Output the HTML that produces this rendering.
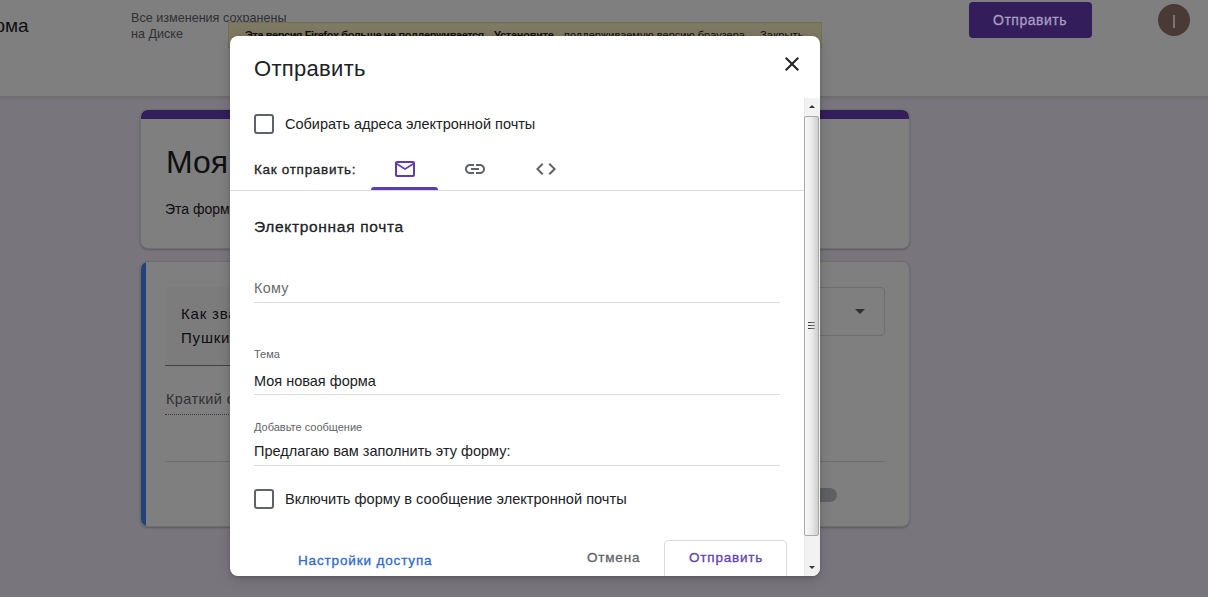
<!DOCTYPE html>
<html><head><meta charset="utf-8">
<style>
*{box-sizing:border-box;margin:0;padding:0}
html,body{width:1208px;height:597px;overflow:hidden}
body{position:relative;background:#f0ebf8;font-family:"Liberation Sans",sans-serif;color:#202124}
.abs{position:absolute}
.t{position:absolute;white-space:nowrap;line-height:1}
#hdr{left:0;top:0;width:1208px;height:97px;background:#fff;border-bottom:1px solid #dadce0;box-shadow:0 1px 3px rgba(0,0,0,.12)}
.card{position:absolute;background:#fff;border:1px solid #dadce0;border-radius:8px;overflow:hidden;box-shadow:0 1px 2px rgba(60,64,67,.3)}
#overlay{left:0;top:0;width:1208px;height:597px;background:rgba(0,0,0,.5)}
#dlg{left:230px;top:36px;width:590px;height:540px;background:#fff;border-radius:8px;overflow:hidden;box-shadow:0 3px 12px rgba(0,0,0,.18),0 1px 3px rgba(0,0,0,.12)}
.cb{position:absolute;width:20px;height:20px;border:2px solid #5f6368;border-radius:3px}
.med{-webkit-text-stroke:0.3px currentColor}
.uline{position:absolute;height:1px;background:#dadce0}
</style></head>
<body>
<!-- page header -->
<div id="hdr" class="abs">
  <div class="t" style="left:-131px;top:16px;font-size:19px;color:#202124">Моя новая форма</div>
  <div class="t" style="left:131px;top:10px;font-size:12.6px;line-height:16px;color:#5f6368">Все изменения сохранены<br>на Диске</div>
  <div class="abs" style="left:969px;top:2px;width:123px;height:36px;background:#673ab7;border-radius:4px"></div>
  <div class="abs" style="left:1158px;top:4px;width:32px;height:32px;border-radius:50%;background:#94746a"></div>
  <div class="abs" style="left:1173px;top:15px;width:2px;height:13px;background:#f0e8e8"></div>
</div>
<!-- butterbar -->
<div class="abs" style="left:228px;top:22px;width:594px;height:26px;background:#fdf3c4;border:1px solid #e9dca8"></div>
<div class="t" style="left:245px;top:30px;font-size:11px;font-weight:bold;letter-spacing:-0.4px;color:#222">Эта версия Firefox больше не поддерживается.</div>
<div class="t" style="left:494px;top:30px;font-size:11px;font-weight:bold;letter-spacing:-0.25px;color:#222">Установите</div>
<div class="t" style="left:564px;top:30px;font-size:11px;color:#222">поддерживаемую версию браузера.</div>
<div class="t" style="left:760px;top:30px;font-size:11px;letter-spacing:0.2px;color:#222">Закрыть</div>

<!-- card 1 -->
<div class="card" style="left:140px;top:109px;width:770px;height:140px">
  <div class="abs" style="left:-1px;top:-1px;width:770px;height:10px;background:#673ab7"></div>
  <div class="t" style="left:25px;top:36px;font-size:32px;color:#202124">Моя новая форма</div>
  <div class="t" style="left:24px;top:92px;font-size:14px;color:#202124">Эта форма</div>
</div>
<!-- card 2 -->
<div class="card" style="left:140px;top:261px;width:770px;height:266px">
  <div class="abs" style="left:-1px;top:-1px;width:6px;height:266px;background:#4285f4"></div>
  <div class="abs" style="left:24px;top:25px;width:500px;height:79px;background:#f8f9fa;border-bottom:1px solid #80868b"></div>
  <div class="t" style="left:40px;top:40px;font-size:15px;letter-spacing:0.8px;line-height:24px;color:#202124">Как звали<br>Пушкина?</div>
  <div class="t" style="left:25px;top:130px;font-size:14.5px;letter-spacing:0.4px;color:#5f6368">Краткий ответ</div>
  <div class="abs" style="left:24px;top:152px;width:300px;height:1px;border-bottom:1px dotted #70757a"></div>
  <div class="abs" style="left:24px;top:199px;width:720px;height:1px;background:#dadce0"></div>
  <div class="abs" style="left:670px;top:25px;width:74px;height:49px;border:1px solid #dadce0;border-radius:4px"></div>
  <div class="abs" style="left:714px;top:47px;width:0;height:0;border-left:5px solid transparent;border-right:5px solid transparent;border-top:5px solid #5f6368"></div>
  <div class="abs" style="left:660px;top:226px;width:36px;height:14px;border-radius:7px;background:#bdc1c6"></div>
</div>

<div id="overlay" class="abs"></div>
<div class="t med" style="left:993px;top:13px;font-size:14px;letter-spacing:0.5px;color:#a99ec2">Отправить</div>

<!-- dialog -->
<div id="dlg" class="abs">
  <div class="t" style="left:24px;top:22px;font-size:22px;letter-spacing:0.3px;color:#202124">Отправить</div>
  <svg class="abs" style="left:550px;top:16px" width="24" height="24" viewBox="0 0 24 24"><path d="M19 6.41L17.59 5 12 10.59 6.41 5 5 6.41 10.59 12 5 17.59 6.41 19 12 13.41 17.59 19 19 17.59 13.41 12z" fill="#202124"/></svg>

  <div class="cb" style="left:24px;top:78px"></div>
  <div class="t" style="left:55px;top:81px;font-size:14.5px;color:#202124">Собирать адреса электронной почты</div>

  <div class="t med" style="left:24px;top:127px;font-size:13.5px;letter-spacing:0.7px;color:#202124">Как отправить:</div>
  <svg class="abs" style="left:163px;top:121px" width="24" height="24" viewBox="0 0 24 24"><path d="M20 4H4c-1.1 0-2 .9-2 2v12c0 1.1.9 2 2 2h16c1.1 0 2-.9 2-2V6c0-1.1-.9-2-2-2zm0 14H4V8l8 5 8-5v10zm-8-7L4 6h16l-8 5z" fill="#5f3bb0"/></svg>
  <svg class="abs" style="left:233px;top:121px" width="24" height="24" viewBox="0 0 24 24"><path d="M3.9 12c0-1.71 1.39-3.1 3.1-3.1h4V7H7c-2.76 0-5 2.24-5 5s2.24 5 5 5h4v-1.9H7c-1.71 0-3.1-1.39-3.1-3.1zM8 13h8v-2H8v2zm9-6h-4v1.9h4c1.71 0 3.1 1.39 3.1 3.1s-1.39 3.1-3.1 3.1h-4V17h4c2.76 0 5-2.24 5-5s-2.24-5-5-5z" fill="#5f6368"/></svg>
  <svg class="abs" style="left:304px;top:121px" width="24" height="24" viewBox="0 0 24 24"><path d="M9.4 16.6L4.8 12l4.6-4.6L8 6l-6 6 6 6 1.4-1.4zm5.2 0l4.6-4.6-4.6-4.6L16 6l6 6-6 6-1.4-1.4z" fill="#5f6368"/></svg>
  <div class="abs" style="left:141px;top:151px;width:67px;height:3px;background:#5f3bb0;border-radius:3px 3px 0 0"></div>
  <div class="abs" style="left:0;top:154px;width:574px;height:1px;background:#dadce0"></div>

  <div class="t med" style="left:24px;top:183px;font-size:15.5px;letter-spacing:0.68px;color:#202124">Электронная почта</div>

  <div class="t" style="left:24px;top:245px;font-size:14.3px;letter-spacing:0.3px;color:#676b70">Кому</div>
  <div class="uline" style="left:24px;top:266px;width:526px"></div>

  <div class="t" style="left:24px;top:313px;font-size:11px;color:#5f6368">Тема</div>
  <div class="t" style="left:24px;top:338px;font-size:14.5px;color:#202124">Моя новая форма</div>
  <div class="uline" style="left:24px;top:358px;width:526px"></div>

  <div class="t" style="left:24px;top:386px;font-size:11px;color:#5f6368">Добавьте сообщение</div>
  <div class="t" style="left:24px;top:408px;font-size:14.5px;color:#202124">Предлагаю вам заполнить эту форму:</div>
  <div class="uline" style="left:24px;top:429px;width:526px"></div>

  <div class="cb" style="left:24px;top:453px"></div>
  <div class="t" style="left:55px;top:456px;font-size:14.6px;color:#202124">Включить форму в сообщение электронной почты</div>

  <div class="t med" style="left:68px;top:517.5px;font-size:13.5px;letter-spacing:0.85px;color:#3069cc">Настройки доступа</div>
  <div class="t med" style="left:357px;top:515.3px;font-size:13.5px;letter-spacing:0.8px;color:#5f6368">Отмена</div>
  <div class="abs" style="left:434px;top:504px;width:123px;height:40px;border:1px solid #dadce0;border-radius:4px"></div>
  <div class="t med" style="left:459px;top:515.3px;font-size:13.5px;letter-spacing:0.8px;color:#5f42ad">Отправить</div>

  <!-- scrollbar -->
  <div class="abs" style="left:574px;top:62px;width:16px;height:478px;background:#f2f2f2;border-left:1px solid #e8e8e8"></div>
  <div class="abs" style="left:578.5px;top:69px;width:0;height:0;border-left:3.5px solid transparent;border-right:3.5px solid transparent;border-bottom:3.5px solid #353535"></div>
  <div class="abs" style="left:574px;top:80px;width:15px;height:420px;border:1px solid #a8a8a8;border-radius:2px;background:linear-gradient(to right,#f8f8f8,#ebebeb 50%,#cdcdcd)"></div>
  <div class="abs" style="left:578px;top:286px;width:7px;height:1px;background:linear-gradient(to right,#303030,#8a8a8a)"></div>
  <div class="abs" style="left:578px;top:289px;width:7px;height:1px;background:linear-gradient(to right,#303030,#8a8a8a)"></div>
  <div class="abs" style="left:578px;top:292px;width:7px;height:1px;background:linear-gradient(to right,#303030,#8a8a8a)"></div>
  <div class="abs" style="left:578.5px;top:530px;width:0;height:0;border-left:3.5px solid transparent;border-right:3.5px solid transparent;border-top:3.5px solid #353535"></div>
</div>
</body></html>
